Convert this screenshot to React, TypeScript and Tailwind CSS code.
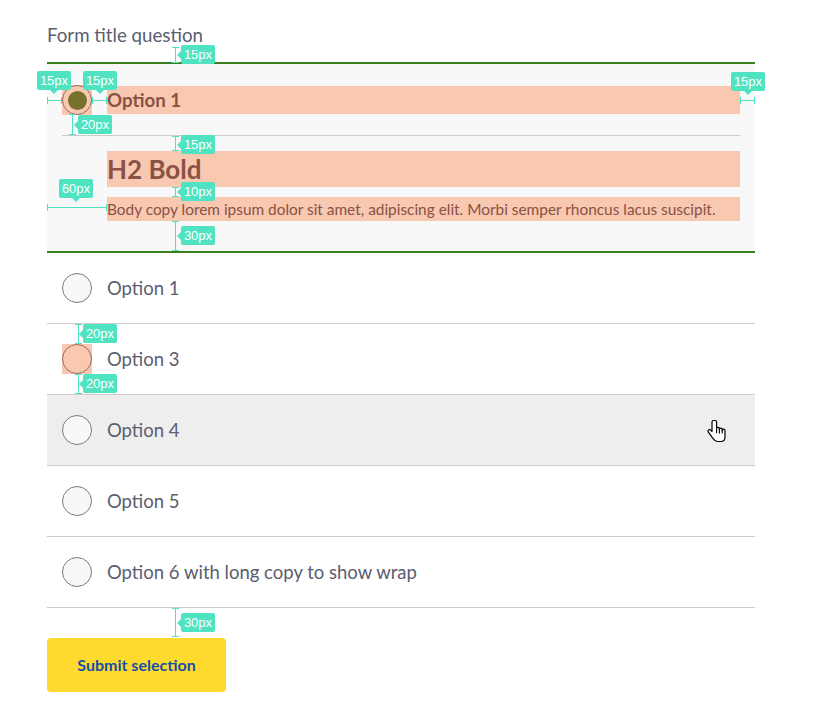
import React from "react";

const options = [
    { label: "Option 1" },
    { label: "Option 3", marked: true },
    { label: "Option 4", hover: true },
    { label: "Option 5" },
    { label: "Option 6 with long copy to show wrap" },
];

function Badge({ x, y, text, pointer }: { x: number; y: number; text: string; pointer: "left" | "down" }) {
    return (
        <div className="absolute" style={{ left: x, top: y }}>
            <div className="relative h-[19px] w-[34px] rounded-[2px] bg-[#50e3c2] text-white text-[13px] leading-[19px] text-center font-['Liberation_Sans',Arial,sans-serif]">
                {text}
                {pointer === "left" ? (
                    <span className="absolute left-[-4px] top-[6px] w-0 h-0 border-y-[4px] border-y-transparent border-r-[4px] border-r-[#50e3c2]" />
                ) : (
                    <span className="absolute bottom-[-4px] left-[13px] w-0 h-0 border-x-[4px] border-x-transparent border-t-[4px] border-t-[#50e3c2]" />
                )}
            </div>
        </div>
    );
}

function VMeasure({ x, y1, y2 }: { x: number; y1: number; y2: number }) {
    return (
        <div className="absolute flex flex-col items-center w-[7px]" style={{ left: x - 3, top: y1, height: y2 - y1 }}>
            <div className="h-px w-[7px] bg-[#50e3c2]" />
            <div className="flex-1 w-px bg-[#50e3c2]" />
            <div className="h-px w-[7px] bg-[#50e3c2]" />
        </div>
    );
}

function HMeasure({ y, x1, x2 }: { y: number; x1: number; x2: number }) {
    return (
        <div className="absolute flex items-center h-[7px]" style={{ top: y - 3, left: x1, width: x2 - x1 }}>
            <div className="w-px h-[7px] bg-[#50e3c2]" />
            <div className="flex-1 h-px bg-[#50e3c2]" />
            <div className="w-px h-[7px] bg-[#50e3c2]" />
        </div>
    );
}

function HandCursor() {
    return (
        <svg width="20" height="24" viewBox="0 0 20 24" className="absolute left-[707px] top-[419px]">
            <path
                d="M6.5 1.5c-.8 0-1.5.7-1.5 1.5v9.5l-1.2-1.3c-.7-.7-1.8-.7-2.4 0-.5.6-.5 1.4 0 2l4.1 5.6c1 1.4 2.4 3.7 5 3.7h3.2c2.6 0 4.3-2 4.3-4.6v-6.4c0-.8-.6-1.4-1.4-1.4s-1.4.6-1.4 1.4v-1c0-.8-.6-1.4-1.4-1.4s-1.4.6-1.4 1.4v-.8c0-.8-.6-1.4-1.4-1.4S9.6 8.4 9.6 9.2V3c0-.8-.7-1.5-1.5-1.5z"
                fill="#fff"
                stroke="#000"
                strokeWidth="1.2"
                strokeLinejoin="round"
            />
            <path d="M9.6 9.2v5M12.4 10v4.4M15.2 11v3.6" stroke="#000" strokeWidth="1.1" />
        </svg>
    );
}

export default function App() {
    return (
        <div className="relative w-[815px] h-[702px] bg-white font-['Lato','Liberation_Sans',sans-serif]">
            <div className="pl-[47px] pt-[23px] w-[755px]">
                <h1 className="text-[18.7px] leading-[24px] text-[#5b5d70] mb-[15px]">Form title question</h1>

                {/* Selected option */}
                <div className="border-y-2 border-[#3b7d23] bg-[#f8f8f8] px-[15px] pt-[21px] pb-[30px]">
                    <div className="flex items-center gap-[15px] pb-[20px] border-b border-[#cccccc]">
                        <div className="w-[30px] h-[30px] bg-[#f9c8b1] shrink-0 flex items-center justify-center">
                            <div className="w-[30px] h-[30px] rounded-full border border-[#9a6a5c] flex items-center justify-center">
                                <div className="w-[19px] h-[19px] rounded-full bg-[#78712b]" />
                            </div>
                        </div>
                        <div className="flex-1 h-[28px] bg-[#f9c8b1] text-[18.7px] leading-[28px] font-bold text-[#8a5244]">Option 1</div>
                    </div>
                    <div className="pl-[45px] pt-[15px]">
                        <h2 className="h-[36px] bg-[#f9c8b1] text-[26px] leading-[36px] font-bold text-[#8a5244]">H2 Bold</h2>
                        <p className="mt-[10px] h-[24px] bg-[#f9c8b1] text-[15.4px] leading-[24px] text-[#8a5244] whitespace-nowrap">
                            Body copy lorem ipsum dolor sit amet, adipiscing elit. Morbi semper rhoncus lacus suscipit.
                        </p>
                    </div>
                </div>

                {/* Other options */}
                {options.map((opt) => (
                    <div
                        key={opt.label}
                        className={`flex items-center gap-[15px] px-[15px] py-[20px] border-b border-[#cccccc] ${opt.hover ? "bg-[#eeeeee]" : ""}`}
                    >
                        <div className={`w-[30px] h-[30px] shrink-0 ${opt.marked ? "bg-[#f9c8b1]" : ""}`}>
                            <div
                                className={`w-[30px] h-[30px] rounded-full border ${opt.marked ? "border-[#9a6a5c] bg-[#f9c8b1]" : "border-[#7a7a7a] bg-[#f8f8f8]"}`}
                            />
                        </div>
                        <span className="text-[18.5px] leading-[30px] text-[#5b5d70]">{opt.label}</span>
                    </div>
                ))}

                <button className="mt-[30px] w-[179px] h-[54px] rounded-[4px] bg-[#fed92e] text-[16px] font-bold text-[#1550a8]">
                    Submit selection
                </button>
            </div>

            <HandCursor />

            {/* Spec annotations */}
            <VMeasure x={175} y1={47} y2={63} />
            <Badge x={181} y={45} text="15px" pointer="left" />
            <HMeasure y={100} x1={47} x2={62} />
            <Badge x={37} y={71} text="15px" pointer="down" />
            <HMeasure y={100} x1={92} x2={107} />
            <Badge x={83} y={71} text="15px" pointer="down" />
            <HMeasure y={100} x1={740} x2={755} />
            <Badge x={731} y={72} text="15px" pointer="down" />
            <VMeasure x={72} y1={114} y2={135} />
            <Badge x={78} y={115} text="20px" pointer="left" />
            <VMeasure x={175} y1={136} y2={151} />
            <Badge x={181} y={135} text="15px" pointer="left" />
            <HMeasure y={207} x1={47} x2={107} />
            <Badge x={59} y={179} text="60px" pointer="down" />
            <VMeasure x={175} y1={187} y2={197} />
            <Badge x={181} y={182} text="10px" pointer="left" />
            <VMeasure x={175} y1={221} y2={251} />
            <Badge x={181} y={226} text="30px" pointer="left" />
            <VMeasure x={78} y1={324} y2={344} />
            <Badge x={83} y={324} text="20px" pointer="left" />
            <VMeasure x={78} y1={374} y2={394} />
            <Badge x={83} y={374} text="20px" pointer="left" />
            <VMeasure x={175} y1={608} y2={637} />
            <Badge x={181} y={613} text="30px" pointer="left" />
        </div>
    );
}
